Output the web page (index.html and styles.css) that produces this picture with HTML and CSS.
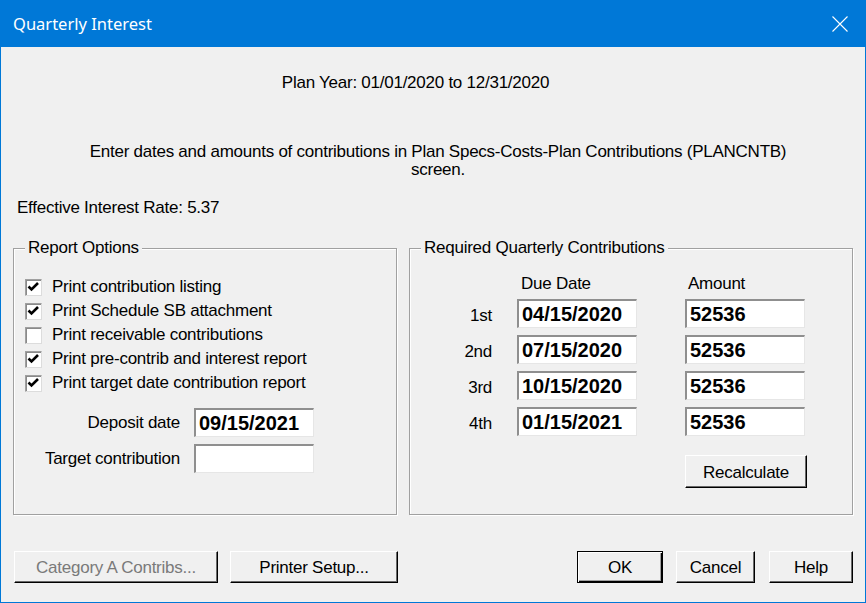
FILE: index.html
```html
<!DOCTYPE html>
<html lang="en">
<head>
    <meta charset="UTF-8">
    <title>Quarterly Interest</title>
    <link rel="stylesheet" href="styles.css">
</head>
<body>
<div class="window">
    <div class="titlebar">
        <span class="title">Quarterly Interest</span>
        <svg class="close" width="16" height="16" viewBox="0 0 16 16">
            <path d="M0.5 0.5L15.5 15.5M15.5 0.5L0.5 15.5" stroke="#fff" stroke-width="1.1" fill="none"/>
        </svg>
    </div>
    <div class="client">
        <p class="plan-year">Plan Year: 01/01/2020 to 12/31/2020</p>
        <p class="note">Enter dates and amounts of contributions in Plan Specs-Costs-Plan Contributions (PLANCNTB) screen.</p>
        <p class="rate">Effective Interest Rate: 5.37</p>

        <div class="groups">
            <div class="group report">
                <div class="group-title">Report Options</div>
                <ul class="checks">
                    <li><span class="check"><svg width="15" height="15" viewBox="0 0 15 15"><polyline points="2.5,6.5 5.5,9.5 12,3" fill="none" stroke="#000" stroke-width="2.6"/></svg></span>Print contribution listing</li>
                    <li><span class="check"><svg width="15" height="15" viewBox="0 0 15 15"><polyline points="2.5,6.5 5.5,9.5 12,3" fill="none" stroke="#000" stroke-width="2.6"/></svg></span>Print Schedule SB attachment</li>
                    <li><span class="check"></span>Print receivable contributions</li>
                    <li><span class="check"><svg width="15" height="15" viewBox="0 0 15 15"><polyline points="2.5,6.5 5.5,9.5 12,3" fill="none" stroke="#000" stroke-width="2.6"/></svg></span>Print pre-contrib and interest report</li>
                    <li><span class="check"><svg width="15" height="15" viewBox="0 0 15 15"><polyline points="2.5,6.5 5.5,9.5 12,3" fill="none" stroke="#000" stroke-width="2.6"/></svg></span>Print target date contribution report</li>
                </ul>
                <div class="form">
                    <label>Deposit date</label>
                    <input class="field" type="text" value="09/15/2021" readonly>
                    <label>Target contribution</label>
                    <input class="field" type="text" value="" readonly>
                </div>
            </div>

            <div class="group quarterly">
                <div class="group-title">Required Quarterly Contributions</div>
                <div class="quarters">
                    <span></span>
                    <span class="head date">Due Date</span>
                    <span class="head amount">Amount</span>

                    <span class="q">1st</span>
                    <input class="field" type="text" value="04/15/2020" readonly>
                    <input class="field" type="text" value="52536" readonly>

                    <span class="q">2nd</span>
                    <input class="field" type="text" value="07/15/2020" readonly>
                    <input class="field" type="text" value="52536" readonly>

                    <span class="q">3rd</span>
                    <input class="field" type="text" value="10/15/2020" readonly>
                    <input class="field" type="text" value="52536" readonly>

                    <span class="q">4th</span>
                    <input class="field" type="text" value="01/15/2021" readonly>
                    <input class="field" type="text" value="52536" readonly>

                    <button class="btn recalc">Recalculate</button>
                </div>
            </div>
        </div>

        <div class="actions">
            <button class="btn btn-category" disabled>Category A Contribs...</button>
            <button class="btn btn-printer">Printer Setup...</button>
            <button class="btn btn-ok">OK</button>
            <button class="btn btn-cancel">Cancel</button>
            <button class="btn btn-help">Help</button>
        </div>
    </div>
</div>
</body>
</html>
```

FILE: styles.css
```css
*{margin: 0;padding: 0;box-sizing: border-box;}

body{
    width: 866px;
    height: 603px;
    overflow: hidden;
    background: #f0f0f0;
    color: #000;
    font-family: "Liberation Sans", Arial, sans-serif;
    font-size: 17px;
    letter-spacing: -0.25px;
}
.window{
    height: 603px;
    border: 1px solid #0078d7;
    border-top: 0;
    background: #f0f0f0;
}

/* title bar */
.titlebar{
    height: 47px;
    margin: 0 -1px;
    padding: 0 18px 0 13px;
    background: #0078d7;
    color: #fff;
    display: flex;
    align-items: center;
    justify-content: space-between;
    font-family: "Noto Sans", "Open Sans", sans-serif;
    font-size: 16.5px;
    letter-spacing: 0;
}
.titlebar .close{
    display: block;
}

/* texts */
.client{
    padding-top: 26px;
}
.plan-year{
    line-height: 20px;
    text-align: center;
    margin-right: 35px;
}
.note{
    width: 740px;
    margin: 50px 0 0 67px;
    line-height: 18px;
    text-align: center;
}
.rate{
    margin: 20px 0 0 16px;
    line-height: 18px;
}

/* group boxes */
.groups{
    display: flex;
    gap: 12px;
    height: 267px;
    margin: 31px 12px 0;
}
.group{
    border: 1px solid #a0a0a0;
    box-shadow: inset 1px 1px #fff, 1px 1px #fff;
}
.report{
    width: 384px;
}
.quarterly{
    flex: 1;
}
.group-title{
    width: max-content;
    margin: -14px 0 0 11px;
    padding: 3px 3px 0;
    background: linear-gradient(transparent 3px, #f0f0f0 3px);
    line-height: 20px;
}

/* checkboxes */
.checks{
    list-style: none;
    margin-top: 17px;
    padding-left: 11px;
}
.checks li{
    height: 24px;
    display: flex;
    align-items: center;
    gap: 10px;
}
.check{
    width: 17px;
    height: 17px;
    background: #fff;
    border: 1px solid;
    border-color: #a0a0a0 #dcdcdc #dcdcdc #a0a0a0;
    box-shadow: inset 1px 1px #8a8a8a;
}
.check svg{
    display: block;
}

/* edit fields */
.field{
    width: 120px;
    height: 29px;
    padding: 0 3px;
    background: #fff;
    border-style: solid;
    border-width: 2px 1px 1px 2px;
    border-color: #8f8f8f #e6e6e6 #e6e6e6 #8f8f8f;
    outline: none;
    color: #000;
    font-family: "Liberation Sans", Arial, sans-serif;
    font-size: 20px;
    font-weight: bold;
    letter-spacing: 0;
}

.form{
    display: grid;
    grid-template-columns: 155px 120px;
    column-gap: 14px;
    row-gap: 7px;
    align-items: center;
    margin-top: 13px;
    padding-left: 11px;
}
.form label{
    text-align: right;
    padding-top: 1px;
}

.quarters{
    display: grid;
    grid-template-columns: 107px 168px 120px;
    row-gap: 7px;
    align-items: center;
    margin-top: 13px;
}
.quarters .head{
    line-height: 16px;
    padding-top: 5px;
}
.quarters .head.date{
    padding-left: 4px;
}
.quarters .head.amount{
    padding-left: 3px;
}
.quarters .q{
    text-align: right;
    padding: 4px 25px 0 0;
}

/* push buttons */
.btn{
    height: 32px;
    padding-top: 2px;
    background: #f0f0f0;
    color: #000;
    font: inherit;
    letter-spacing: inherit;
    border: 1px solid;
    border-color: #fff #000 #000 #fff;
    box-shadow: inset -1px -1px #696969;
}
.btn:disabled{
    color: #7a7a7a;
}
.recalc{
    grid-column: 3;
    width: 122px;
    height: 33px;
    margin-top: 12px;
}

.actions{
    display: flex;
    margin: 36px 12px 0 13px;
}
.btn-category{
    width: 204px;
}
.btn-printer{
    width: 168px;
    margin-left: 12px;
}
.btn-ok{
    width: 86px;
    margin-left: auto;
    border-color: #000;
    box-shadow: inset 1px 1px #fff, inset -1px -1px #000, inset -2px -2px #a0a0a0;
}
.btn-cancel{
    width: 79px;
    margin-left: 13px;
}
.btn-help{
    width: 84px;
    margin-left: 14px;
}
```
